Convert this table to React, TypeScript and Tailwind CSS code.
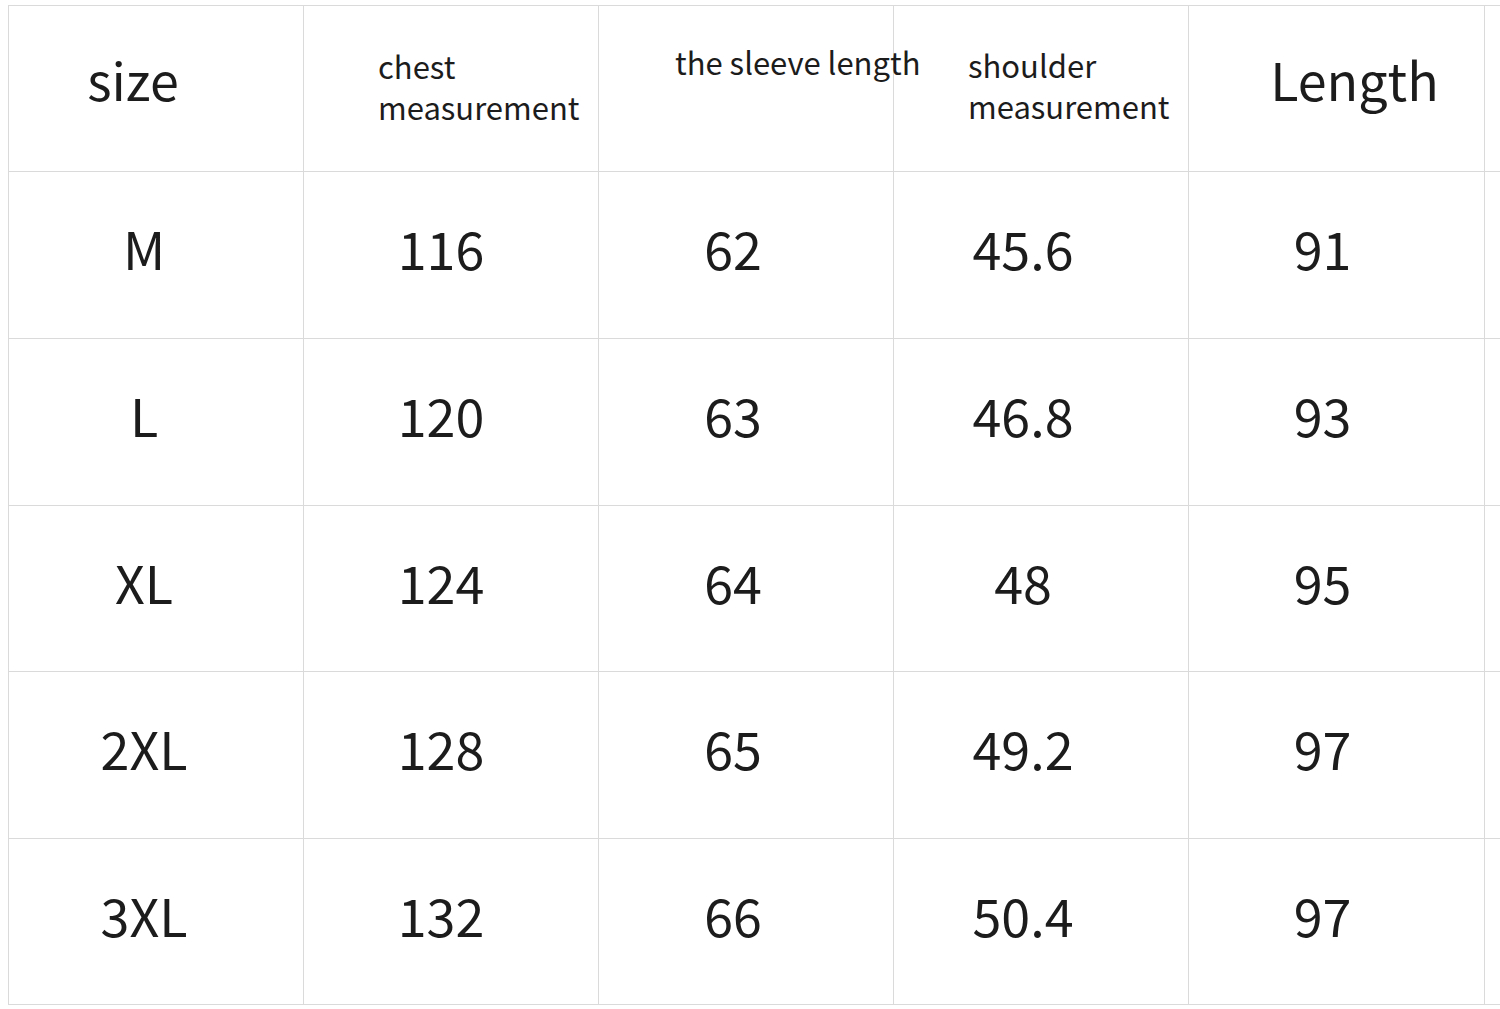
const rows = [
  ["M", "116", "62", "45.6", "91"],
  ["L", "120", "63", "46.8", "93"],
  ["XL", "124", "64", "48", "95"],
  ["2XL", "128", "65", "49.2", "97"],
  ["3XL", "132", "66", "50.4", "97"],
];

// small per-column nudges so the numbers sit where the photo has them
const dataPad = ["pr-[24px]", "pr-[20px]", "pr-[26px]", "pr-[36px]", "pr-[28px]"];

const cell = "border-r border-b border-[#dadada] flex";

export default function App() {
  return (
    <div
      className="w-[1500px] h-[1009px] bg-white overflow-hidden text-[#1c1c1c]"
      style={{ fontFamily: '"Noto Sans CJK SC", "Noto Sans", sans-serif' }}
    >
      <div className="ml-[8px] mt-[5px] grid grid-cols-[295px_295px_295px_295px_296px_16px] grid-rows-[166px_167px_167px_166px_167px_166px] border-t border-l border-[#dadada]">
        {/* header */}
        <div className={`${cell} items-center justify-center pr-[46px] pb-[20px] text-[52px] leading-none`}>size</div>
        <div className={`${cell} items-center pl-[74px] pb-[6px] text-[31px] leading-[41px]`}>
          <div>
            chest
            <br />
            measurement
          </div>
        </div>
        <div className={`${cell} items-start pl-[76px] pt-[36px] text-[31px] leading-[40px] whitespace-nowrap overflow-visible relative z-10`}>
          the sleeve length
        </div>
        <div className={`${cell} items-center pl-[74px] pb-[8px] text-[31px] leading-[41px]`}>
          <div>
            shoulder
            <br />
            measurement
          </div>
        </div>
        <div className={`${cell} items-center justify-center pl-[36px] pb-[20px] text-[52px] leading-none`}>Length</div>
        <div className="border-b border-[#dadada]" />

        {rows.map((r, i) => (
          <div key={i} className="contents">
            {r.map((v, j) => (
              <div key={j} className={`${cell} items-center justify-center pb-[14px] text-[52px] leading-none ${dataPad[j]}`}>
                {v}
              </div>
            ))}
            <div className="border-b border-[#dadada]" />
          </div>
        ))}
      </div>
    </div>
  );
}
